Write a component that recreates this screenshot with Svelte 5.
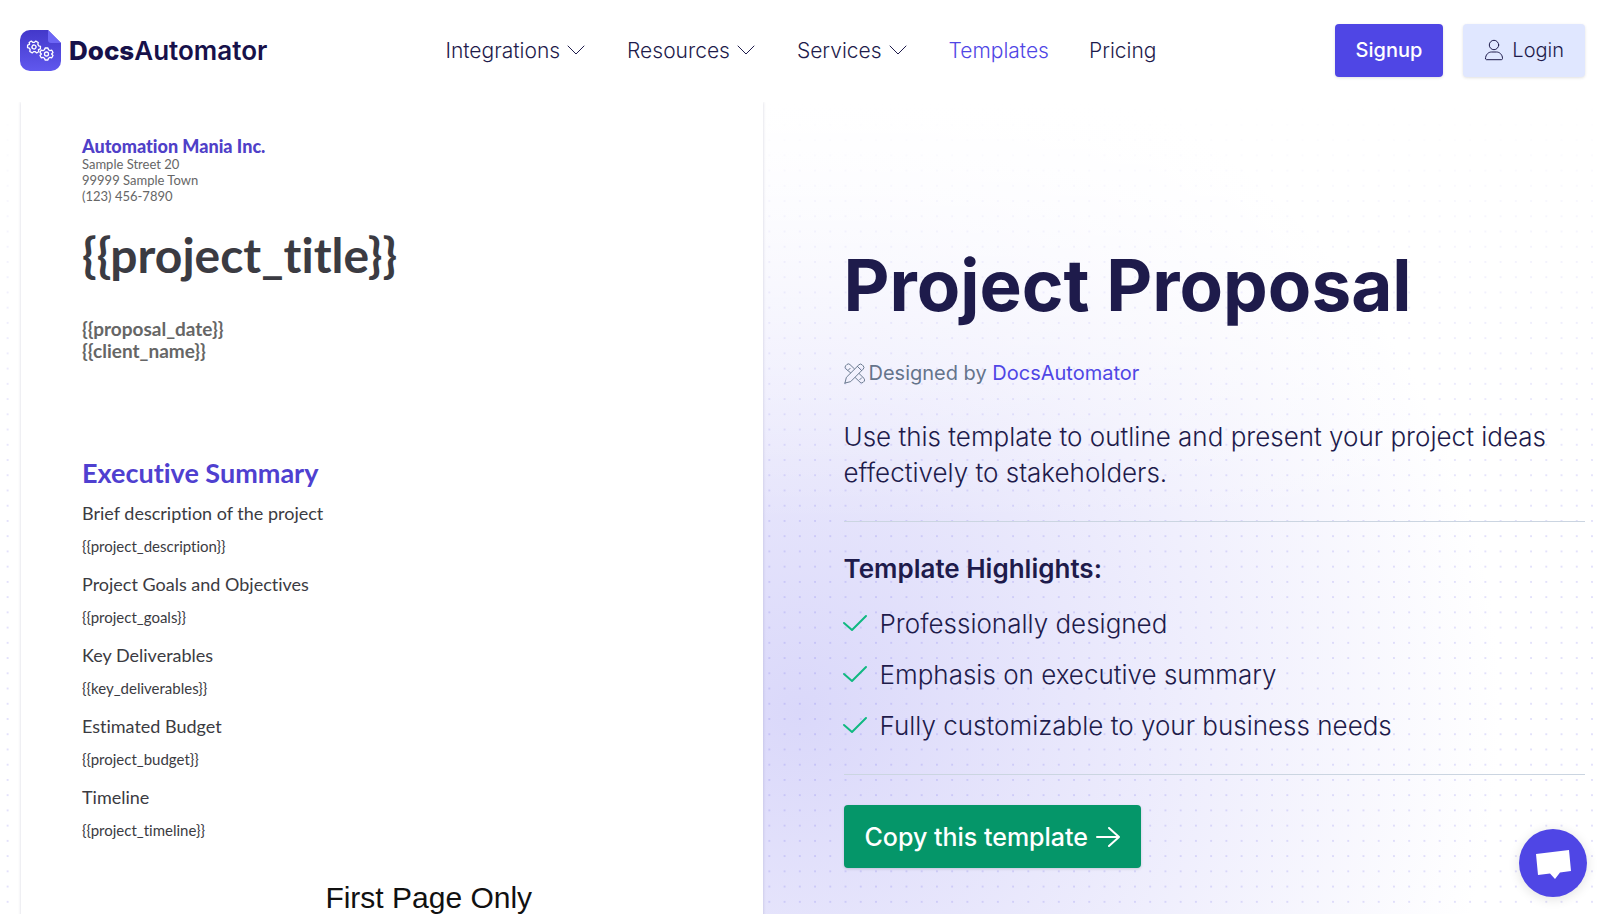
<script>
  const links = [
    { label: 'Integrations', menu: true },
    { label: 'Resources', menu: true },
    { label: 'Services', menu: true },
    { label: 'Templates', active: true },
    { label: 'Pricing' }
  ]

  const sections = [
    { title: 'Brief description of the project', field: 'project_description' },
    { title: 'Project Goals and Objectives', field: 'project_goals' },
    { title: 'Key Deliverables', field: 'key_deliverables' },
    { title: 'Estimated Budget', field: 'project_budget' },
    { title: 'Timeline', field: 'project_timeline' }
  ]

  const highlights = [
    'Professionally designed',
    'Emphasis on executive summary',
    'Fully customizable to your business needs'
  ]

  const tag = (name) => '{{' + name + '}}'
</script>

{#snippet gear()}
  <path d="M-1.4 -6 L1.4 -6 L2 -4.2 L3.5 -3.4 L5.3 -3.8 L6.5 -1.5 L5.1 0 L6.5 1.5 L5.3 3.8 L3.5 3.4 L2 4.2 L1.4 6 L-1.4 6 L-2 4.2 L-3.5 3.4 L-5.3 3.8 L-6.5 1.5 L-5.1 0 L-6.5 -1.5 L-5.3 -3.8 L-3.5 -3.4 L-2 -4.2 Z" />
  <circle r="2" />
{/snippet}

<header>
  <a href="/" class="logo">
    <svg viewBox="0 0 41 41" width="41" height="41" aria-hidden="true">
      <defs>
        <linearGradient id="brand" x1="0" y1="0" x2="0" y2="1">
          <stop offset="0" stop-color="#4338ca" />
          <stop offset="1" stop-color="#6058ee" />
        </linearGradient>
      </defs>
      <path d="M10 0H28L41 13V31a10 10 0 0 1-10 10H10A10 10 0 0 1 0 31V10A10 10 0 0 1 10 0Z" fill="url(#brand)" />
      <path d="M28 0L41 13H31a3 3 0 0 1-3-3Z" fill="#6d66f5" />
      <g fill="none" stroke="#fff" stroke-width="1.3" stroke-linejoin="round">
        <g transform="translate(14 17) rotate(30)">{@render gear()}</g>
        <g transform="translate(26.500 24)">{@render gear()}</g>
      </g>
    </svg>
    <span><b>Docs</b>Automator</span>
  </a>

  <nav>
    {#each links as link}
      <a href="/" class:active={link.active}>
        {link.label}
        {#if link.menu}
          <svg viewBox="0 0 20 10" width="20" height="10" aria-hidden="true">
            <path d="M1 1l8 8 8-8" />
          </svg>
        {/if}
      </a>
    {/each}
  </nav>

  <div class="actions">
    <a href="/" class="btn signup">Signup</a>
    <a href="/" class="btn login">
      <svg viewBox="0 0 20 22" width="20" height="22" aria-hidden="true">
        <circle cx="10" cy="6" r="4.700" />
        <path d="M1.500 19.500c0-4 3-6.500 6-6.500h5c3 0 6 2.500 6 6.500 0 .8-.5 1.200-1.200 1.200H2.700c-.7 0-1.200-.4-1.200-1.200Z" />
      </svg>
      Login
    </a>
  </div>
</header>

<main>
  <article class="preview">
    <h4>Automation Mania Inc.</h4>
    <address>
      Sample Street 20<br />
      99999 Sample Town<br />
      (123) 456-7890
    </address>
    <h2>{tag('project_title')}</h2>
    <p class="meta">
      {tag('proposal_date')}<br />
      {tag('client_name')}
    </p>
    <h3>Executive Summary</h3>
    {#each sections as section}
      <h5>{section.title}</h5>
      <p class="field">{tag(section.field)}</p>
    {/each}
    <p class="footer">First Page Only</p>
  </article>

  <section class="info">
    <h1>Project Proposal</h1>
    <p class="author">
      <svg viewBox="0 0 22 22" width="21" height="21" aria-hidden="true">
        <path d="M1 21l1.500-6L15.600 1.900a2.400 2.400 0 0 1 3.400 0l1.100 1.100a2.400 2.400 0 0 1 0 3.400L7 19.500 1 21Z" />
        <path d="M6.800 10.200L1.700 5.900a2.400 2.400 0 0 1 0-3l1.300-1.300a2.400 2.400 0 0 1 3.200 0L10.800 6M4.500 7.500l2-2M12 15.500l4.900 4.700a2.400 2.400 0 0 0 3.200 0l.9-.9a2.400 2.400 0 0 0 0-3.200L16 11.200M16.500 17.500l2-2M14 3.500l4.500 4.500" />
      </svg>
      <span>Designed by <a href="/">DocsAutomator</a></span>
    </p>
    <p class="lead">Use this template to outline and present your project ideas effectively to stakeholders.</p>
    <hr />
    <h2>Template Highlights:</h2>
    <ul>
      {#each highlights as item}
        <li>
          <svg viewBox="1 0 24 18" width="24" height="18" aria-hidden="true">
            <path d="M1 8l8 7L23 1" />
          </svg>
          {item}
        </li>
      {/each}
    </ul>
    <hr />
    <button class="copy">
      Copy this template
      <svg viewBox="0 0 24 20" width="24" height="20" aria-hidden="true">
        <path d="M1 10h22M13 1l10 9-10 9" />
      </svg>
    </button>
  </section>
</main>

<button class="chat" aria-label="Open chat">
  <svg viewBox="0 0 68 68" width="68" height="68" aria-hidden="true">
    <path d="M17 25L50 21L52 42L41 43.500L36 50L31 44.500L19 46Z" fill="#fff" />
  </svg>
</button>

<style>
  :global(body) {
    background: #fff;
    color: #1e1b4b;
    font-family: Inter, sans-serif;
    font-weight: 300;
    overflow: hidden;
  }

  h1, h2, h3, h4, h5, p, ul {
    margin: 0;
    padding: 0;
  }

  a {
    color: inherit;
    text-decoration: none;
  }

  svg {
    flex: none;
    fill: none;
    stroke: currentColor;
    stroke-linecap: round;
    stroke-linejoin: round;
  }

  header {
    position: relative;
    z-index: 1;
    display: flex;
    align-items: center;
    justify-content: space-between;
    height: 102px;
    padding: 0 15px 2px 20px;
    box-sizing: border-box;
    background: #fff;
  }

  .logo {
    display: flex;
    align-items: center;
    gap: 8px;
    color: #17114a;
    font-size: 26px;
    font-weight: 600;
  }

  .logo svg {
    stroke: none;
  }

  .logo b {
    font-weight: 800;
  }

  nav {
    display: flex;
    gap: 40px;
    font-size: 21px;
  }

  nav a {
    display: flex;
    align-items: center;
    gap: 7px;
  }

  nav .active {
    color: #4f46e5;
  }

  .actions {
    display: flex;
    gap: 20px;
  }

  .btn {
    display: flex;
    align-items: center;
    gap: 8px;
    height: 53px;
    padding: 0 21px;
    border-radius: 4px;
    font-size: 20px;
    box-shadow: 0 1px 3px rgba(0, 0, 0, 0.12);
  }

  .signup {
    background: #4f46e5;
    color: #fff;
    font-weight: 500;
  }

  .login {
    background: #e0e7ff;
  }

  main {
    display: grid;
    grid-template-columns: 1fr 1fr;
    gap: 81px;
    padding: 0 15px 0 21px;
    background:
      linear-gradient(#fff, rgba(255, 255, 255, 0.6) 150px, rgba(255, 255, 255, 0) 420px),
      radial-gradient(circle, rgba(79, 70, 229, 0.16) 1px, transparent 1px) 0 0 / calc(100vw / 105) calc(100vw / 105),
      radial-gradient(circle 700px at 50% 610px, #dad8fa, #fff);
  }

  .preview {
    padding: 34px 61px 0;
    background: #fff;
    color: #3b3b42;
    box-shadow: 0 0 3px rgba(30, 27, 75, 0.18);
    font-family: "Proxima Nova", Lato, sans-serif;
    font-weight: 400;
    font-variant-ligatures: none;
  }

  .preview h4 {
    color: #4f40c8;
    font-size: 18px;
    font-weight: 900;
    line-height: 20px;
  }

  address {
    color: #666;
    font-size: 13px;
    font-style: normal;
    line-height: 16px;
  }

  .preview h2 {
    margin-top: 23px;
    font-size: 48px;
    line-height: 56px;
  }

  .meta {
    margin-top: 35px;
    color: #666;
    font-size: 19px;
    font-weight: 700;
    line-height: 22px;
  }

  .preview h3 {
    margin: 95px 0 12px;
    color: #4f40d0;
    font-size: 27px;
    line-height: 32px;
  }

  h5 {
    font-size: 18px;
    font-weight: 400;
    line-height: 24px;
  }

  .field {
    margin: 11px 0 15px;
    font-size: 15px;
    line-height: 21px;
  }

  .footer {
    margin-top: 37px;
    padding-left: 74px;
    color: #111;
    font-family: "Liberation Sans", Arial, sans-serif;
    font-size: 30px;
    line-height: 40px;
    text-align: center;
  }

  .info {
    padding-top: 140px;
  }

  h1 {
    font-size: 71px;
    font-weight: 700;
    line-height: 86px;
  }

  .author {
    display: flex;
    align-items: center;
    gap: 4px;
    margin-top: 30px;
    color: #64748b;
    font-size: 20px;
    font-weight: 400;
    line-height: 30px;
  }

  .author a {
    color: #4f46e5;
  }

  .lead {
    margin-top: 31px;
    font-size: 26px;
    line-height: 36px;
  }

  hr {
    height: 1px;
    margin: 30px 0;
    border: 0;
    background: #cbd5e1;
  }

  .info h2 {
    font-size: 26px;
    font-weight: 600;
    line-height: 34px;
  }

  ul {
    display: grid;
    gap: 15px;
    margin-top: 20px;
    list-style: none;
  }

  li {
    display: flex;
    align-items: center;
    gap: 12px;
    font-size: 26px;
    line-height: 36px;
  }

  li svg {
    overflow: visible;
    color: #10b981;
    stroke-width: 2;
  }

  .copy {
    display: flex;
    align-items: center;
    gap: 8px;
    height: 63px;
    margin-bottom: 60px;
    padding: 0 21px;
    border: 0;
    border-radius: 4px;
    background: #059669;
    color: #fff;
    font: 500 25px Inter, sans-serif;
    box-shadow: 0 1px 3px rgba(0, 0, 0, 0.15);
  }

  .copy svg {
    stroke-width: 2;
  }

  .chat {
    position: fixed;
    right: 13px;
    bottom: 17px;
    padding: 0;
    border: 0;
    border-radius: 50%;
    background: #4f46e5;
    box-shadow: 0 2px 12px rgba(0, 0, 0, 0.12);
  }

  .chat svg {
    display: block;
    stroke: none;
  }
</style>
